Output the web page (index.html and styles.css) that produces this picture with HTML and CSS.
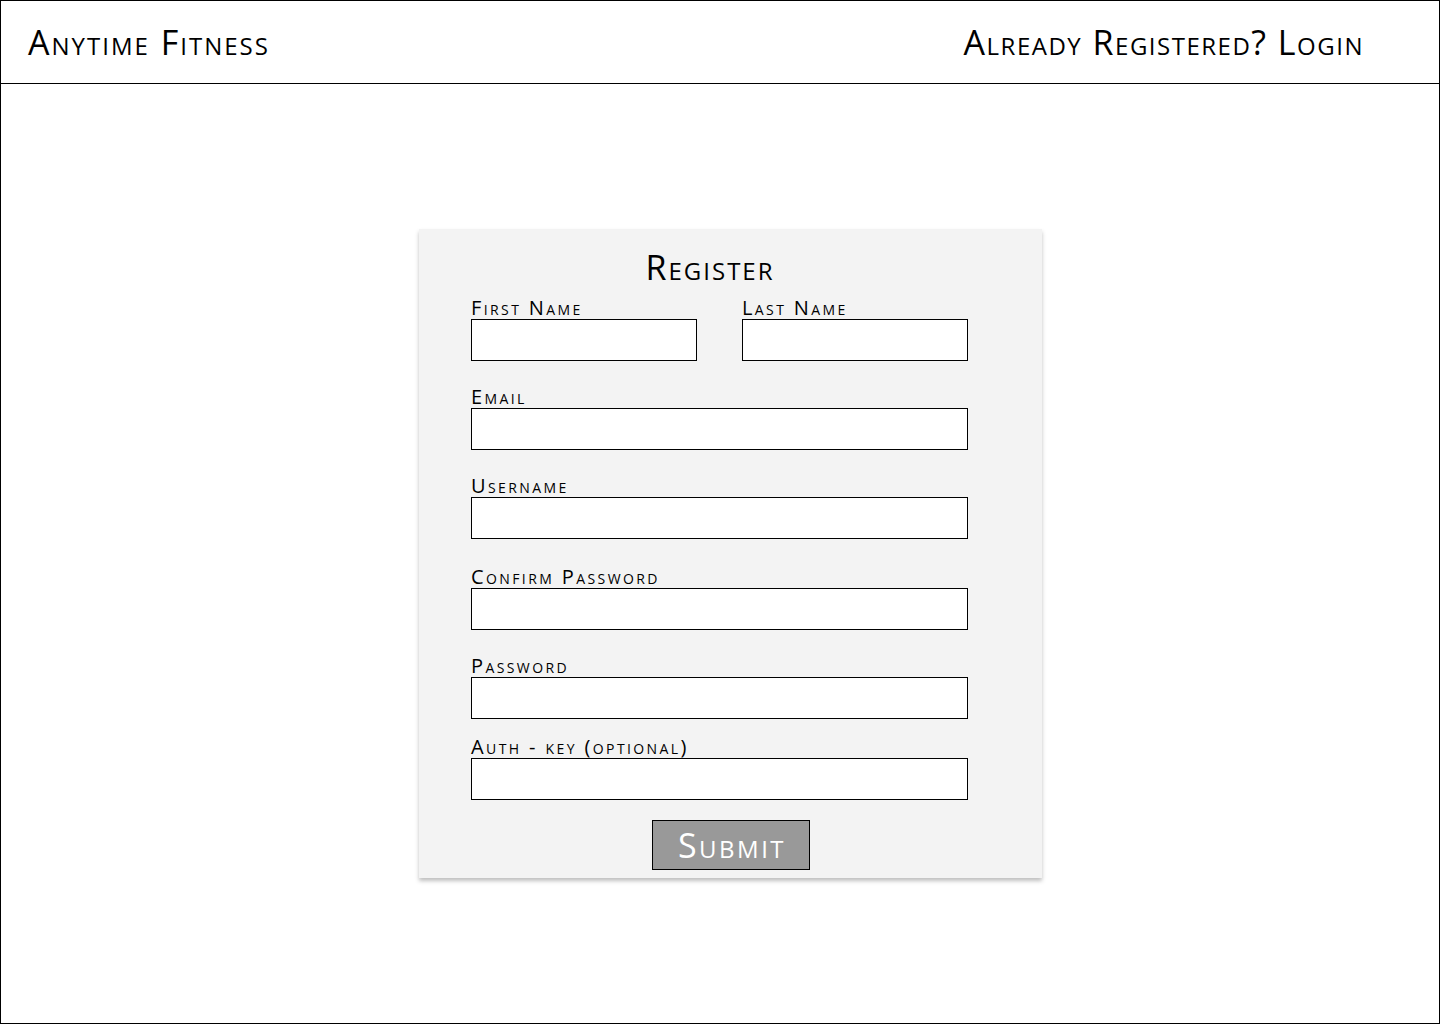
FILE: index.html
```html
<!DOCTYPE html>
<html>
<head>
<meta charset="utf-8">
<title>Register - Anytime Fitness</title>
<link rel="stylesheet" href="styles.css">
</head>
<body>
<div class="page">
  <header class="topbar">
    <div class="brand">Anytime Fitness</div>
    <div class="login">Already Registered? Login</div>
  </header>
  <main class="main">
    <form class="card">
      <h1 class="title">Register</h1>
      <div class="row two">
        <div class="field">
          <label class="label">First Name</label>
          <div class="input"></div>
        </div>
        <div class="field">
          <label class="label">Last Name</label>
          <div class="input"></div>
        </div>
      </div>
      <div class="field wide gap1">
        <label class="label">Email</label>
        <div class="input"></div>
      </div>
      <div class="field wide gap1">
        <label class="label">Username</label>
        <div class="input"></div>
      </div>
      <div class="field wide gap2">
        <label class="label">Confirm Password</label>
        <div class="input"></div>
      </div>
      <div class="field wide gap1">
        <label class="label">Password</label>
        <div class="input"></div>
      </div>
      <div class="field wide gap3">
        <label class="label">Auth - key (optional)</label>
        <div class="input"></div>
      </div>
      <div class="actions">
        <div class="submit">Submit</div>
      </div>
    </form>
  </main>
</div>
</body>
</html>
```
FILE: styles.css
```css
* { box-sizing: border-box; }
html, body { margin: 0; padding: 0; background: #fff; }
body {
  font-family: "Open Sans", Lato, sans-serif;
  font-variant: small-caps;
  color: #000;
}
.page {
  width: 1440px;
  height: 1024px;
  border: 1px solid #000;
  display: flex;
  flex-direction: column;
}
.topbar {
  height: 83px;
  border-bottom: 1px solid #000;
  display: flex;
  align-items: center;
  justify-content: space-between;
  padding: 0 75px 0 27px;
  font-size: 34px;
  line-height: 34px;
}
.brand { letter-spacing: 2px; }
.login { letter-spacing: 1.5px; }
.main {
  flex: 1;
  padding: 145px 0 0 418px;
}
.card {
  width: 623px;
  height: 649px;
  background: #f3f3f3;
  box-shadow: 0 3px 4px rgba(0,0,0,0.25);
  padding: 16px 0 0 52px;
  margin: 0;
}
.title {
  margin: 0;
  width: 478px;
  text-align: center;
  font-weight: normal;
  font-size: 34px;
  line-height: 44px;
  letter-spacing: 2px;
}
.row.two {
  display: flex;
  gap: 45px;
  width: 497px;
  margin-top: 8px;
}
.row.two .field { width: 226px; }
.field { display: flex; flex-direction: column; }
.wide { width: 497px; }
.gap1 { margin-top: 25px; }
.gap2 { margin-top: 27px; }
.gap3 { margin-top: 17px; }
.label {
  font-size: 20px;
  line-height: 22px;
  height: 22px;
  letter-spacing: 2.4px;
  white-space: nowrap;
}
.input {
  height: 42px;
  background: #fff;
  border: 1px solid #000;
}
.actions {
  width: 520px;
  display: flex;
  justify-content: center;
  margin-top: 20px;
}
.submit {
  width: 158px;
  height: 50px;
  background: #999;
  border: 1px solid #000;
  color: #fff;
  font-size: 34px;
  line-height: 48px;
  letter-spacing: 2.5px;
  text-align: center;
  padding-left: 2px;
}
```
